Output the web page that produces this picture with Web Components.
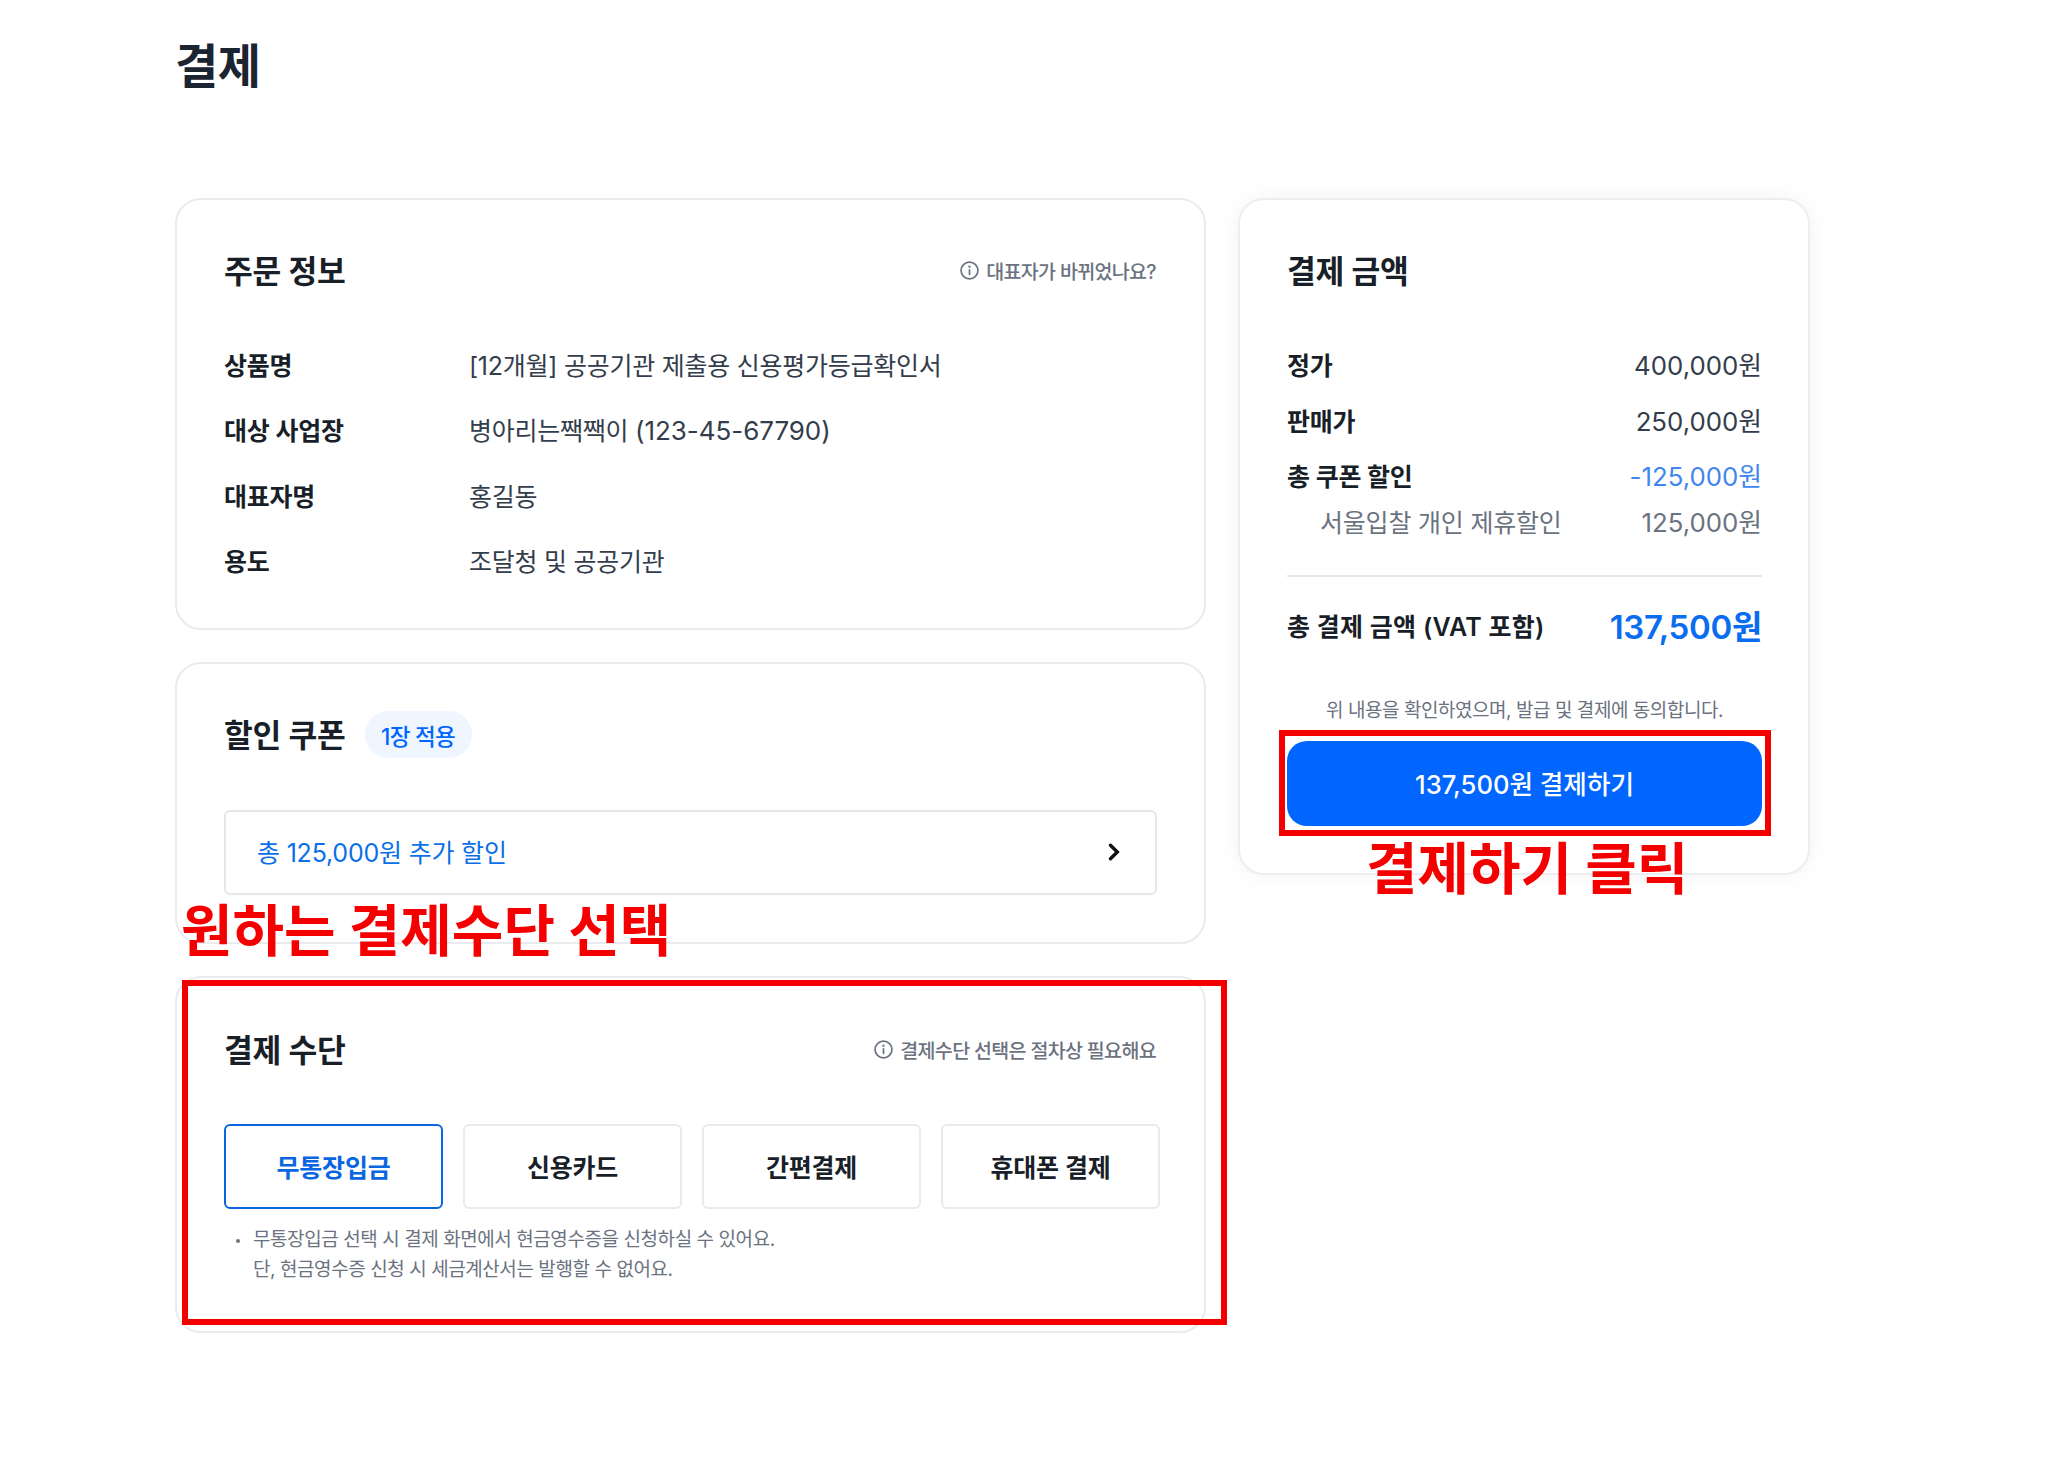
<!DOCTYPE html>
<html lang="ko">
<head>
<meta charset="utf-8">
<title>결제</title>
<style>
  html, body { margin: 0; background: #fff; }
  body { font-family: Inter, "Noto Sans CJK KR", sans-serif; color: #191f28; }
</style>
</head>
<body>
<pay-page>
  <pay-card slot="left" heading="주문 정보">
    <info-note slot="aside">대표자가 바뀌었나요?</info-note>
    <order-row label="상품명">[12개월] 공공기관 제출용 신용평가등급확인서</order-row>
    <order-row label="대상 사업장">병아리는짹짹이 <span style="font-size:26px;letter-spacing:-.05px">(123-45-67790)</span></order-row>
    <order-row label="대표자명">홍길동</order-row>
    <order-row label="용도">조달청 및 공공기관</order-row>
  </pay-card>

  <pay-card slot="left" heading="할인 쿠폰" style="--shift:1px">
    <coupon-badge slot="badge">1장 적용</coupon-badge>
    <coupon-select>총 125,000원 추가 할인</coupon-select>
  </pay-card>

  <pay-card slot="left" heading="결제 수단" style="--shift:2px">
    <info-note slot="aside">결제수단 선택은 절차상 필요해요</info-note>
    <method-list>
      <method-button selected>무통장입금</method-button>
      <method-button>신용카드</method-button>
      <method-button>간편결제</method-button>
      <method-button>휴대폰 결제</method-button>
    </method-list>
    <method-notice>
      무통장입금 선택 시 결제 화면에서 현금영수증을 신청하실 수 있어요.<br>
      단, 현금영수증 신청 시 세금계산서는 발행할 수 없어요.
    </method-notice>
  </pay-card>

  <pay-card slot="right" heading="결제 금액" raised>
    <price-row label="정가">400,000원</price-row>
    <price-row label="판매가" style="margin-top:16px">250,000원</price-row>
    <price-row label="총 쿠폰 할인" tone="blue" style="margin-top:15px">-125,000원</price-row>
    <price-row label="서울입찰 개인 제휴할인" tone="sub" style="margin-top:6px">125,000원</price-row>
    <price-total label="총 결제 금액 (VAT 포함)">137,500원</price-total>
    <pay-button note="위 내용을 확인하였으며, 발급 및 결제에 동의합니다.">137,500원 결제하기</pay-button>
  </pay-card>

  <!-- red annotations drawn over the screenshot -->
  <red-box slot="over" style="left:182px;top:980px;width:1045px;height:345px"></red-box>
  <red-box slot="over" style="left:1279px;top:730px;width:492px;height:106px"></red-box>
  <red-label slot="over" style="left:181px;top:891px">원하는 결제수단 선택</red-label>
  <red-label slot="over" style="left:1366px;top:829px">결제하기 클릭</red-label>
</pay-page>

<script>
const define = (name, css, html) => {
  customElements.define(name, class extends HTMLElement {
    connectedCallback() {
      if (this.shadowRoot) return;
      this.attachShadow({ mode: 'open' });
      const get = k => this.getAttribute(k) || '';
      this.shadowRoot.innerHTML = `<style>${css}</style>${typeof html === 'function' ? html(get) : html}`;
    }
  });
};

const infoIcon = `<svg width="19" height="19" viewBox="0 0 20 20" fill="none" stroke="#6b7280" stroke-width="1.8" stroke-linecap="round"><circle cx="10" cy="10" r="8.9"/><path d="M10 9.2v4.8"/><circle cx="10" cy="6" r=".4" fill="#6b7280"/></svg>`;

define('pay-page', `
  :host { display: block; position: relative; height: 1466px; padding: 36px 0 0 175px; box-sizing: border-box; }
  h1 { margin: 0 0 102px; font-size: 47px; line-height: 60px; font-weight: 700; letter-spacing: -.5px; color: #1b2431; }
  .cols { display: grid; grid-template-columns: 1031px 572px; column-gap: 32px; align-items: start; }
  .left { display: flex; flex-direction: column; gap: 32px; }
`, `<h1>결제</h1>
  <div class="cols">
    <div class="left"><slot name="left"></slot></div>
    <div><slot name="right"></slot></div>
  </div>
  <slot name="over"></slot>`);

define('pay-card', `
  :host { display: block; background: #fff; border: 2px solid #e9ebef; border-radius: 26px; padding: 46px 46px 46px 47px; }
  :host([raised]) { box-shadow: 0 0 22px rgba(17,24,39,.05); border-color: #eceef1; padding-bottom: 47px; }
  header { display: flex; align-items: center; height: 48px; gap: 19px; margin-top: var(--shift, 0px); margin-bottom: calc(52px - var(--shift, 0px)); }
  h2 { margin: 0; padding-bottom: 2px; font-size: 31.3px; font-weight: 600; letter-spacing: -.3px; color: #191f28; }
  .aside { margin-left: auto; margin-right: 2px; }
`, get => `<header><h2>${get('heading')}</h2><slot name="badge"></slot><div class="aside"><slot name="aside"></slot></div></header>
  <slot></slot>`);

define('info-note', `
  :host { display: flex; align-items: center; gap: 7px; font-size: 19.5px; font-weight: 500; color: #6b7280; letter-spacing: -.65px; }
  svg { display: block; }
`, `${infoIcon}<slot></slot>`);

define('order-row', `
  :host { display: flex; align-items: center; height: 40px; box-sizing: border-box; padding-bottom: 4px; font-size: 25px; }
  :host(:not(:last-child)) { margin-bottom: 25.3px; }
  b { width: 245px; font-weight: 600; letter-spacing: -.25px; color: #191f28; }
  span { font-weight: 400; letter-spacing: -.25px; color: #333d4b; }
`, get => `<b>${get('label')}</b><span><slot></slot></span>`);

define('coupon-badge', `
  :host { display: flex; align-items: center; justify-content: center; width: 107px; height: 47px; border-radius: 24px; background: #eff6ff; color: #0066ff; font-size: 22.5px; font-weight: 500; letter-spacing: -.7px; }
`, `<slot></slot>`);

define('coupon-select', `
  :host { display: flex; align-items: center; justify-content: space-between; height: 85px; margin: 0 1px 1px 0; padding: 0 34px 2px 31px; box-sizing: border-box; border: 2px solid #e5e7eb; border-radius: 6px; font-size: 25px; letter-spacing: -.2px; color: #0a6fe8; }
  svg { display: block; margin-top: 2px; }
`, `<span><slot></slot></span><svg width="14" height="20" viewBox="0 0 14 20" fill="none" stroke="#111" stroke-width="3.4" stroke-linecap="round" stroke-linejoin="miter"><path d="M3.5 3.2l6.8 6.8-6.8 6.8"/></svg>`);

define('method-list', `
  :host { display: flex; gap: 20px; width: 936px; }
`, `<slot></slot>`);

define('method-button', `
  :host { display: flex; align-items: center; justify-content: center; flex: none; width: 219px; height: 85px; box-sizing: border-box; border: 2px solid #e8eaed; border-radius: 6px; font-size: 25px; font-weight: 600; letter-spacing: -.2px; color: #191f28; }
  :host([selected]) { border-color: #0a66e0; color: #0a66e0; }
`, `<slot></slot>`);

define('method-notice', `
  :host { display: block; position: relative; margin-top: 16px; padding-left: 29px; font-size: 19px; line-height: 30px; color: #6b7280; letter-spacing: -.43px; }
  i { position: absolute; left: 12px; top: 14px; width: 4px; height: 4px; border-radius: 50%; background: #6b7280; }
`, `<i></i><slot></slot>`);

define('price-row', `
  :host { display: flex; align-items: center; justify-content: space-between; height: 40px; box-sizing: border-box; padding-bottom: 5px; font-size: 25px; color: #333d4b; }
  b { font-weight: 600; letter-spacing: -.3px; color: #191f28; }
  span { font-size: 25.8px; }
  :host([tone="blue"]) span { color: #3f86ee; }
  :host([tone="sub"]) b { font-weight: 400; color: #6b7280; padding-left: 33px; letter-spacing: -.2px; }
  :host([tone="sub"]) span { color: #6b7280; }
`, get => `<b>${get('label')}</b><span><slot></slot></span>`);

define('price-total', `
  :host { display: flex; align-items: center; justify-content: space-between; height: 48px; margin-top: 32px; padding-top: 24px; border-top: 2px solid #e5e7eb; font-size: 25px; font-weight: 600; color: #191f28; }
  b { font-weight: 600; letter-spacing: .25px; }
  span { font-size: 33px; font-weight: 600; color: #0a6cf0; letter-spacing: -.3px; }
`, get => `<b>${get('label')}</b><span><slot></slot></span>`);

define('pay-button', `
  :host { display: block; margin-top: 47px; }
  p { margin: 0 0 15px; height: 30px; line-height: 30px; text-align: center; font-size: 19px; color: #6b7280; letter-spacing: -.45px; }
  div { display: flex; align-items: center; justify-content: center; height: 85px; box-sizing: border-box; padding-bottom: 3px; border-radius: 20px; background: #0066ff; color: #fff; font-size: 25.6px; font-weight: 500; }
`, get => `<p>${get('note')}</p><div><slot></slot></div>`);

define('red-box', `
  :host { display: block; position: absolute; box-sizing: border-box; border: 6px solid #f50000; }
`, ``);

define('red-label', `
  :host { display: block; position: absolute; font-size: 56px; line-height: 80px; font-weight: 700; color: #f50000; white-space: nowrap; }
`, `<slot></slot>`);
</script>
</body>
</html>
